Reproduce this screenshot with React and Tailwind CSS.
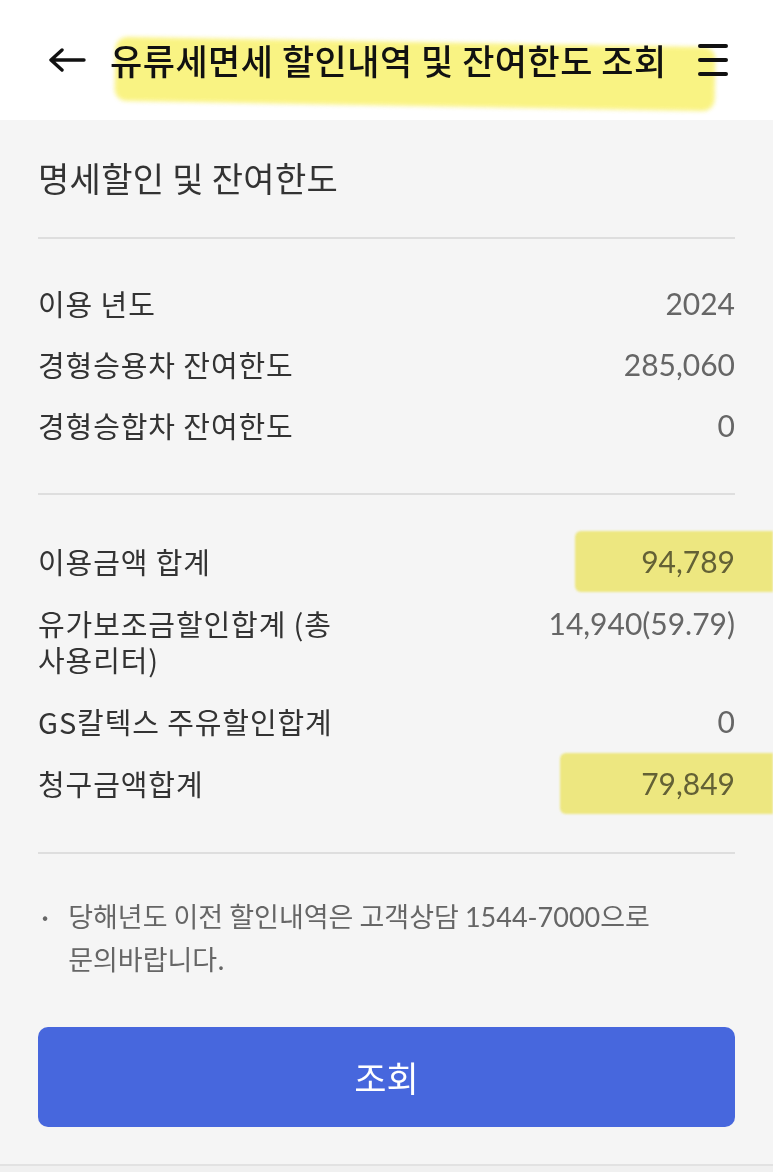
const ko = { fontFamily: '"Noto Sans CJK KR", "Noto Sans", sans-serif' };
const num = { fontFamily: 'Lato, "Noto Sans CJK KR", sans-serif' };

const yearRows = [
  { label: "이용 년도", value: "2024" },
  { label: "경형승용차 잔여한도", value: "285,060" },
  { label: "경형승합차 잔여한도", value: "0" },
];

const sumRows = [
  { label: "이용금액 합계", value: "94,789", mark: "w-[198px]" },
  { label: "유가보조금할인합계 (총 사용리터)", value: "14,940(59.79)" },
  { label: "GS칼텍스 주유할인합계", value: "0" },
  { label: "청구금액합계", value: "79,849", mark: "w-[213px]" },
];

function Row({ label, value, mark }) {
  return (
    <div className="relative flex items-start justify-between gap-4">
      <div className="w-[316px] text-[29px] leading-[36px] tracking-[0.9px] text-[#333]">{label}</div>
      <div className="text-[30px] leading-[36px] text-[#666]" style={num}>
        {value}
      </div>
      {mark && (
        <div
          className={`pointer-events-none absolute -right-[38px] -top-[12px] h-[61px] rounded-l-md bg-[#f4ec5c] opacity-75 mix-blend-multiply blur-[1px] ${mark}`}
        />
      )}
    </div>
  );
}

export default function App() {
  return (
    <div className="min-h-[1172px] w-[773px] overflow-hidden bg-[#f5f5f5]" style={ko}>
      <header className="relative flex h-[120px] items-center bg-white pl-[48px] pr-[44px]">
        <div className="pointer-events-none absolute left-[115px] top-[42px] h-[64px] w-[600px] rotate-[1deg] rounded-xl bg-[#f9f276] opacity-90 blur-[2px]" />
        <svg width="38" height="24" viewBox="0 0 38 24" className="relative shrink-0">
          <path d="M36 12H4M14 2L3 12l11 10" fill="none" stroke="#111" strokeWidth="3.4" strokeLinecap="round" strokeLinejoin="round" />
        </svg>
        <h1 className="relative ml-[24px] flex-1 text-[35px] font-medium tracking-[0.5px] text-[#111]">
          유류세면세 할인내역 및 잔여한도 조회
        </h1>
        <svg width="32" height="34" viewBox="0 0 32 34" className="relative shrink-0">
          <path d="M3 3h26M3 17h26M3 31h26" stroke="#111" strokeWidth="4" strokeLinecap="round" />
        </svg>
      </header>

      <main className="px-[38px]">
        <h2 className="pt-[38px] text-[34px] leading-[40px] tracking-[0.3px] text-[#333]">명세할인 및 잔여한도</h2>
        <div className="mt-[39px] border-t-2 border-[#dedede]" />

        <div className="flex flex-col gap-[25px] pt-[46px] pb-[50px]">
          {yearRows.map((r) => (
            <Row key={r.label} {...r} />
          ))}
        </div>
        <div className="border-t-2 border-[#dedede]" />

        <div className="flex flex-col gap-[26px] pt-[48px] pb-[51px]">
          {sumRows.map((r) => (
            <Row key={r.label} {...r} />
          ))}
        </div>
        <div className="border-t-2 border-[#dedede]" />

        <div className="flex gap-[20px] pt-[41px] text-[27px] leading-[42px] text-[#666]">
          <span className="pl-[4px] text-[18px]">•</span>
          <p>
            당해년도 이전 할인내역은 고객상담 <span style={num}>1544-7000</span>으로
            <br />
            문의바랍니다.
          </p>
        </div>

        <button className="mt-[47px] flex h-[100px] w-full items-center justify-center rounded-[10px] bg-[#4767dd] text-[35px] text-white">
          조회
        </button>
      </main>
      <div className="mt-[37px] h-[8px] border-t-2 border-[#e2e2e2] bg-[#f0f0f0]" />
    </div>
  );
}
